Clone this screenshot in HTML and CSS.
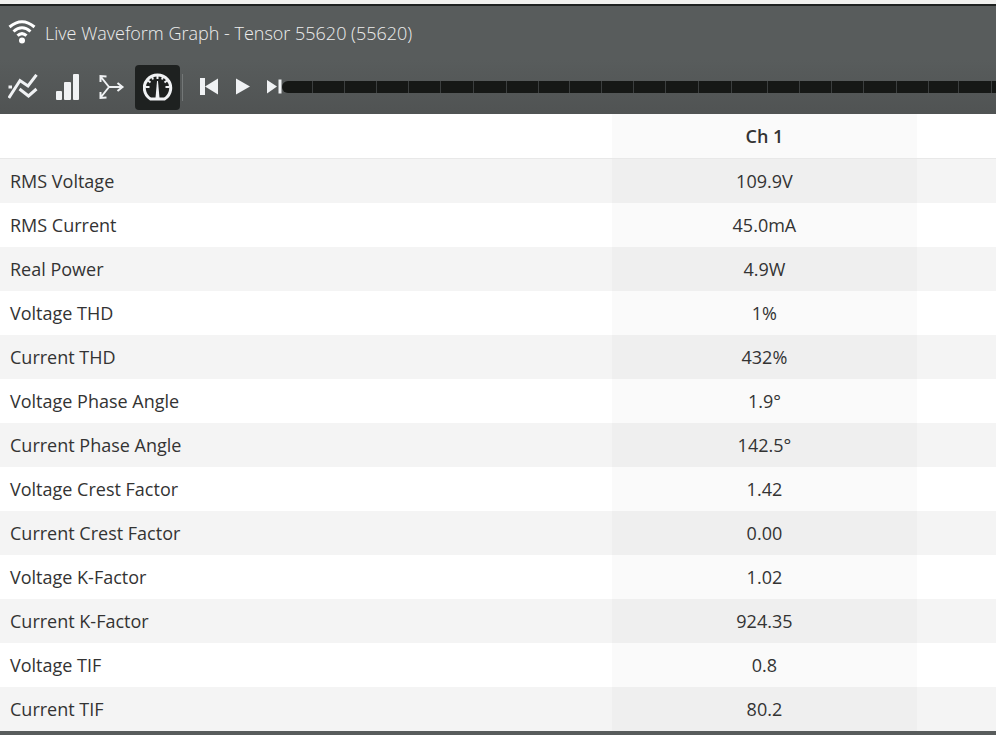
FILE: index.html
```html
<!DOCTYPE html>
<html lang="en">
<head>
    <meta charset="UTF-8">
    <title>Live Waveform Graph</title>
    <meta name="viewport" content="width=device-width, initial-scale=1.0">
    <link rel="stylesheet" href="styles.css">
</head>
<body>
    <div class="panel">
        <header class="title-bar">
            <svg class="wifi" viewBox="0 0 28 24" aria-hidden="true">
                <path d="M1.500 7Q14-3.500 26.500 7M5.500 11.500Q14 4 22.500 11.500M9.500 15.700Q14 11.500 18.500 15.700"/>
                <circle cx="14" cy="20.500" r="3"/>
            </svg>
            <h1>Live Waveform Graph - Tensor 55620 (55620)</h1>
        </header>

        <div class="toolbar">
            <div class="views">
                <button type="button" aria-label="Waveform">
                    <svg viewBox="0 0 30 26" class="line">
                        <path d="M.8 24 12 6.500 20 12 28.500.8M11.500 15l9 7 8-7M.5 13h3.500"/>
                    </svg>
                </button>
                <button type="button" aria-label="Harmonics">
                    <svg viewBox="0 0 30 26">
                        <rect x="3" y="17" width="6" height="9" rx="1"/>
                        <rect x="11" y="8" width="7" height="18" rx="1"/>
                        <rect x="20" y="0" width="6" height="26" rx="1"/>
                    </svg>
                </button>
                <button type="button" aria-label="Phasor">
                    <svg viewBox="0 0 30 26" class="thin">
                        <path d="M11 13h13M11 13 3 3M11 13 3 23M19.500 9l5 4-5 4M2.500 8V2l6 .5M2.500 18v6l6-.5"/>
                    </svg>
                </button>
                <button type="button" class="active" aria-label="Meter">
                    <svg viewBox="0 0 30 30">
                        <path class="dial" d="M7.500 27A13.200 13 0 1 1 21.500 27Z"/>
                        <path class="tick" d="M14.500 3v4M9 4.500l1 3M20 4.500l-1 3M5 8.500l2.500 2M24 8.500l-2.500 2M2.500 15h4M26.500 15h-4"/>
                        <path d="M14 9h1l1.500 17h-4z"/>
                    </svg>
                </button>
            </div>
            <div class="playback">
                <button type="button" aria-label="Previous">
                    <svg viewBox="0 0 20 20"><path d="M1 1h5v17H1zM19 1.500v16L6 9.500z"/></svg>
                </button>
                <button type="button" aria-label="Play">
                    <svg viewBox="0 0 20 20"><path d="M3 1.500v16l14-8z"/></svg>
                </button>
                <button type="button" aria-label="Next">
                    <svg class="next" viewBox="0 0 15 20"><path d="M0 3v13.500l10-7zM11.500 2.500h3v14h-3z"/></svg>
                </button>
            </div>
            <div class="timeline" id="timeline"></div>
        </div>

        <table class="readings">
            <thead>
                <tr><td></td><th scope="col">Ch 1</th><td></td></tr>
            </thead>
            <tbody>
                <tr><th scope="row">RMS Voltage</th><td>109.9V</td><td></td></tr>
                <tr><th scope="row">RMS Current</th><td>45.0mA</td><td></td></tr>
                <tr><th scope="row">Real Power</th><td>4.9W</td><td></td></tr>
                <tr><th scope="row">Voltage THD</th><td>1%</td><td></td></tr>
                <tr><th scope="row">Current THD</th><td>432%</td><td></td></tr>
                <tr><th scope="row">Voltage Phase Angle</th><td>1.9°</td><td></td></tr>
                <tr><th scope="row">Current Phase Angle</th><td>142.5°</td><td></td></tr>
                <tr><th scope="row">Voltage Crest Factor</th><td>1.42</td><td></td></tr>
                <tr><th scope="row">Current Crest Factor</th><td>0.00</td><td></td></tr>
                <tr><th scope="row">Voltage K-Factor</th><td>1.02</td><td></td></tr>
                <tr><th scope="row">Current K-Factor</th><td>924.35</td><td></td></tr>
                <tr><th scope="row">Voltage TIF</th><td>0.8</td><td></td></tr>
                <tr><th scope="row">Current TIF</th><td>80.2</td><td></td></tr>
            </tbody>
        </table>
        <footer class="panel-footer"></footer>
    </div>

    <script>
        // relative length of each captured segment
        const segments = [31, 32, 32, 32, 32, 33, 33, 31, 31, 32, 32, 32, 33, 33, 36, 32, 32, 32, 33, 32, 30, 33, 4];
        const timeline = document.getElementById('timeline');

        segments.forEach(length => {
            const segment = document.createElement('span');
            segment.style.flexGrow = length;
            timeline.appendChild(segment);
        });
    </script>
</body>
</html>
```
FILE: styles.css
```css
* {
    margin: 0;
    padding: 0;
    box-sizing: border-box;
}

body {
    background-color: #f0f0ee;
    padding-top: 4px;
    font-family: "Open Sans", sans-serif;
    font-size: 18px;
    color: #333;
}

.panel {
    border-top: 2px solid #1e2120;
    background-color: #575a5a;
}

.title-bar {
    display: flex;
    align-items: center;
    gap: 9px;
    height: 54px;
    padding: 0 8px;
    background-color: #585c5c;
}

.title-bar h1 {
    font-size: 18px;
    font-weight: 300;
    color: #eee;
}

.wifi {
    width: 28px;
    height: 24px;
    margin-bottom: 2px;
    fill: #fff;
}

.wifi path {
    fill: none;
    stroke: #fff;
    stroke-width: 3;
}

.toolbar {
    display: flex;
    align-items: center;
    height: 54px;
    background: linear-gradient(#585c5c, #505353);
}

.toolbar button {
    display: flex;
    align-items: center;
    justify-content: center;
    border: none;
    background: none;
    cursor: pointer;
}

.toolbar svg {
    fill: #f0f2f4;
    stroke: none;
}

.views {
    display: flex;
    align-items: center;
}

.views::after {
    content: "";
    width: 1px;
    height: 27px;
    margin-left: 2px;
    background-color: #737777;
}

.views button {
    width: 45px;
    height: 45px;
    border-radius: 4px;
}

.views button.active {
    background-color: #1e2120;
}

.views svg {
    width: 30px;
}

.views .line,
.views .thin {
    fill: none;
    stroke: #f0f2f4;
    stroke-width: 3;
}

.views .thin {
    stroke-width: 2;
}

.dial,
.tick {
    fill: none;
    stroke: #f0f2f4;
    stroke-width: 3;
}

.tick {
    stroke-width: 2;
}

.playback {
    display: flex;
    gap: 14px;
    padding-left: 16px;
}

.playback svg {
    width: 20px;
    height: 20px;
}

.playback .next {
    width: 15px;
}

.timeline {
    display: flex;
    flex: 1;
    height: 12px;
    border-radius: 6px 0 0 6px;
    background-color: #161816;
}

.timeline span {
    flex-basis: 0;
    border-right: 1px solid #3c3f3f;
}

.timeline span:last-child {
    border-right: none;
}

.readings {
    width: 100%;
    table-layout: fixed;
    border-collapse: separate;
    border-spacing: 0;
    background-color: #fff;
    line-height: 24px;
}

.readings th,
.readings td {
    height: 44px;
    padding: 10px;
    text-align: center;
    font-weight: 400;
}

.readings thead td:first-child {
    width: 61.4%;
}

.readings thead th {
    width: 30.7%;
    font-weight: 600;
}

.readings thead th,
.readings thead td {
    height: 45px;
    border-bottom: 1px solid #e8e8e8;
}

.readings tbody th {
    text-align: left;
}

.readings tbody tr:nth-child(odd) {
    background-color: #f4f4f4;
}

.readings tr > :nth-child(2) {
    background-color: rgba(0, 0, 0, 0.02);
}

.panel-footer {
    height: 4px;
    background-color: #585c5c;
}
```
